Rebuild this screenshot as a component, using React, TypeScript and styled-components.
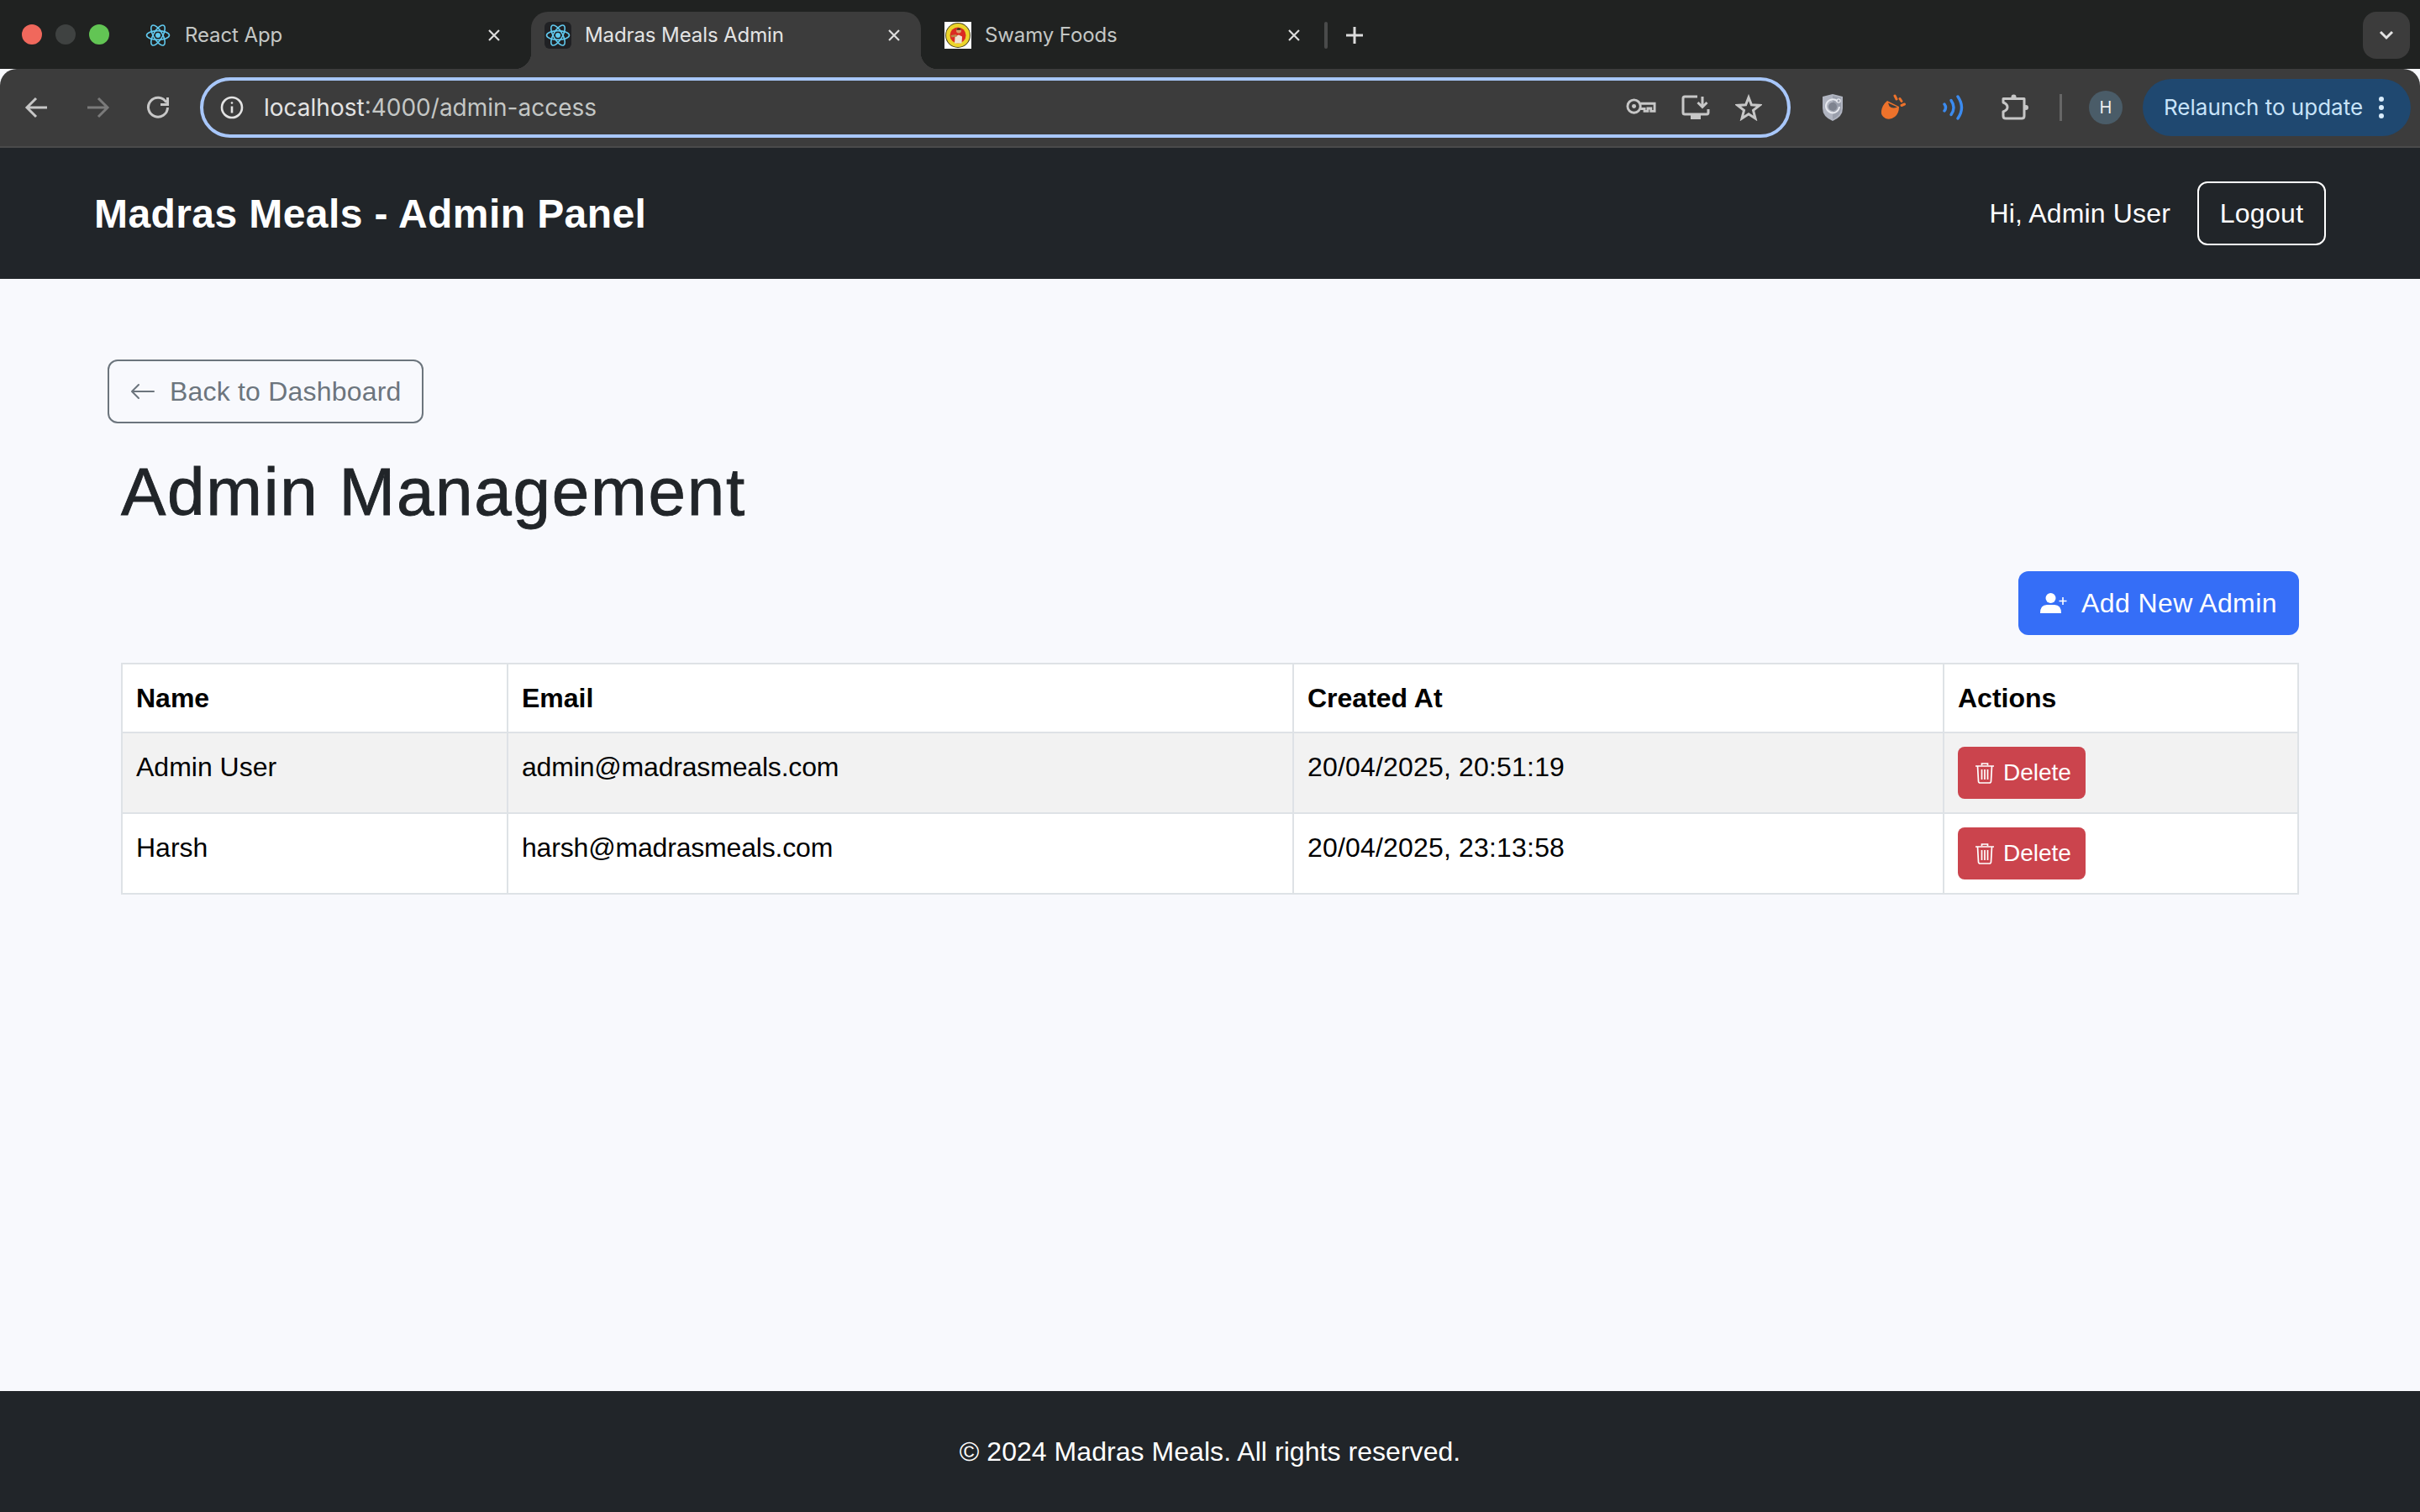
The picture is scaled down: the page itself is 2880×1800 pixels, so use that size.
import React, { FunctionComponent } from "react";
import styled, { createGlobalStyle } from "styled-components";
import { BsArrowLeft } from "react-icons/bs";

const GlobalStyle = createGlobalStyle`
  html, body {
    margin: 0;
    padding: 0;
    background: #f8f9fd;
  }
  * {
    box-sizing: border-box;
  }
`;

const Page = styled.div`
  display: flex;
  flex-direction: column;
  min-height: 1800px;
  font-family: "Liberation Sans", Arial, sans-serif;
  font-size: 32px;
  line-height: 48px;
`;

/* browser chrome */
const TabStrip = styled.div`
  display: flex;
  align-items: flex-end;
  height: 82px;
  background: #202221;
  font-family: Inter, "Liberation Sans", sans-serif;
  font-size: 24px;
`;

const Lights = styled.div`
  display: flex;
  gap: 16px;
  align-self: flex-start;
  padding: 29px 0 0 26px;
  width: 156px;
  flex: none;
`;

const Light = styled.span<{ $color: string }>`
  width: 24px;
  height: 24px;
  border-radius: 50%;
  background: ${(p) => p.$color};
`;

const Tabs = styled.div`
  display: flex;
  gap: 12px;
  align-items: flex-end;
`;

const Tab = styled.div<{ $active?: boolean }>`
  position: relative;
  display: flex;
  align-items: center;
  gap: 16px;
  width: 464px;
  height: 68px;
  padding: 0 24px 13px 16px;
  border-radius: 20px 20px 0 0;
  color: ${(p) => (p.$active ? "#e4e4e4" : "#c4c7c5")};
  background: ${(p) => (p.$active ? "#3c3c3c" : "transparent")};
  letter-spacing: -0.1px;

  ${(p) =>
    p.$active &&
    `
    &::before, &::after {
      content: "";
      position: absolute;
      bottom: 0;
      width: 20px;
      height: 20px;
    }
    &::before {
      left: -20px;
      background: radial-gradient(circle at 0 0, transparent 20px, #3c3c3c 20.5px);
    }
    &::after {
      right: -20px;
      background: radial-gradient(circle at 100% 0, transparent 20px, #3c3c3c 20.5px);
    }
  `}
`;

const FaviconBox = styled.span<{ $dark?: boolean }>`
  display: flex;
  align-items: center;
  justify-content: center;
  width: 32px;
  height: 32px;
  flex: none;
  border-radius: 6px;
  background: ${(p) => (p.$dark ? "#202124" : "transparent")};
`;

const TabTitle = styled.span`
  flex: 1;
  white-space: nowrap;
`;

const TabDivider = styled.span`
  width: 4px;
  height: 32px;
  margin: 0 0 24px 4px;
  border-radius: 2px;
  background: #4a4b4b;
`;

const NewTab = styled.span`
  display: flex;
  margin: 0 0 28px 20px;
`;

const TabMenu = styled.span`
  display: flex;
  align-items: center;
  justify-content: center;
  width: 56px;
  height: 56px;
  margin: 0 12px 12px auto;
  border-radius: 16px;
  background: #3c3c3c;
`;

const Toolbar = styled.div`
  display: flex;
  align-items: center;
  height: 94px;
  padding: 0 11px 0 0;
  background: #3c3c3c;
  border-bottom: 2px solid #4a4a4a;
  border-radius: 20px 20px 0 0;
  font-family: Inter, "Liberation Sans", sans-serif;
`;

const NavIcons = styled.div`
  display: flex;
  gap: 40px;
  width: 238px;
  flex: none;
  padding-left: 28px;
`;

const Omnibox = styled.div`
  display: flex;
  align-items: center;
  width: 1893px;
  height: 72px;
  flex: none;
  padding: 0 30px 0 20px;
  border: 4px solid #a8c7fa;
  border-radius: 36px;
  color: #e3e3e3;
  font-size: 28px;
  line-height: 1;
`;

const UrlHost = styled.span`
  margin-left: 24px;
`;

const UrlPath = styled.span`
  color: #c4c7c5;
  flex: 1;
`;

const OmniActions = styled.div`
  display: flex;
  gap: 30px;
  align-items: center;
`;

const Extensions = styled.div`
  display: flex;
  align-items: center;
  gap: 44px;
  margin-left: 37px;
`;

const ToolDivider = styled.span`
  width: 3px;
  height: 32px;
  margin-left: -7px;
  background: #666;
`;

const Avatar = styled.span`
  display: flex;
  align-items: center;
  justify-content: center;
  width: 40px;
  height: 40px;
  margin-left: -12px;
  border-radius: 50%;
  background: #4a5c68;
  color: #eee;
  font-size: 20px;
`;

const Relaunch = styled.div`
  display: flex;
  align-items: center;
  gap: 18px;
  width: 319px;
  height: 68px;
  margin-left: 24px;
  padding: 0 20px 0 25px;
  border-radius: 34px;
  background: #1f4870;
  color: #c7e3f9;
  font-size: 26px;
  white-space: nowrap;
`;

/* app */
const Navbar = styled.nav`
  display: flex;
  align-items: center;
  justify-content: space-between;
  height: 156px;
  padding: 0 112px;
  background: #212529;
  color: #fff;
`;

const Brand = styled.span`
  padding-top: 2px;
  font-size: 48px;
  font-weight: 700;
  line-height: 1.2;
  letter-spacing: 0.42px;
`;

const NavRight = styled.div`
  display: flex;
  align-items: center;
  gap: 32px;
  letter-spacing: 0.15px;
`;

const OutlineButton = styled.button<{ $color: string }>`
  display: inline-flex;
  align-items: center;
  justify-content: center;
  width: 153px;
  height: 76px;
  padding: 0;
  border: 2px solid ${(p) => p.$color};
  border-radius: 12px;
  background: transparent;
  color: ${(p) => p.$color};
  font: inherit;
  letter-spacing: 0.3px;
  white-space: nowrap;
`;

const Main = styled.main`
  flex: 1;
  display: flex;
  flex-direction: column;
  align-items: flex-start;
  padding: 96px 144px 0 128px;
`;

const BackButton = styled(OutlineButton)`
  justify-content: flex-start;
  gap: 16px;
  width: 376px;
  padding-left: 24px;
  letter-spacing: 0.2px;
`;

const Content = styled.div`
  width: 100%;
  padding-left: 16px;
`;

const Title = styled.h1`
  margin: 34px 0 46px;
  font-size: 80px;
  font-weight: 500;
  line-height: 96px;
  letter-spacing: 1.75px;
  -webkit-text-stroke: 0.9px #212529;
  color: #212529;
`;

const ActionRow = styled.div`
  display: flex;
  justify-content: flex-end;
  margin-bottom: 33px;
`;

const AddButton = styled.button`
  display: inline-flex;
  align-items: center;
  gap: 17px;
  height: 76px;
  width: 334px;
  padding: 0 0 0 26px;
  border: 0;
  border-radius: 12px;
  background: #356ef7;
  color: #fff;
  font: inherit;
  letter-spacing: 0.4px;
  white-space: nowrap;
`;

const Table = styled.table`
  width: 100%;
  table-layout: fixed;
  border-collapse: collapse;
  color: #000;
  background: #fff;
`;

const Th = styled.th<{ $width?: number }>`
  ${(p) => (p.$width ? `width: ${p.$width}px;` : "")}
  padding: 16px;
  border: 2px solid #dee2e6;
  font-weight: 700;
  text-align: left;
`;

const Row = styled.tr<{ $striped?: boolean }>`
  background: ${(p) => (p.$striped ? "#f2f2f2" : "#fff")};
`;

const Td = styled.td<{ $spacing?: number }>`
  padding: 16px;
  border: 2px solid #dee2e6;
  vertical-align: top;
  letter-spacing: ${(p) => p.$spacing ?? 0}px;
`;

const DeleteButton = styled.button`
  display: flex;
  align-items: center;
  gap: 10px;
  width: 152px;
  height: 62px;
  padding: 0 0 0 20px;
  border: 0;
  border-radius: 8px;
  background: #cb444d;
  color: #fff;
  font: inherit;
  font-size: 28px;
`;

const Footer = styled.footer`
  display: flex;
  align-items: center;
  justify-content: center;
  height: 144px;
  background: #212529;
  color: #fff;
  letter-spacing: 0.05px;
`;

/* icons */
const ReactAtom: FunctionComponent = () => (
  <svg width="30" height="32" viewBox="0 0 30 32" fill="none" stroke="#61c9ee" strokeWidth="1.6">
    <ellipse cx="15" cy="16" rx="13.5" ry="5.4" />
    <ellipse cx="15" cy="16" rx="13.5" ry="5.4" transform="rotate(60 15 16)" />
    <ellipse cx="15" cy="16" rx="13.5" ry="5.4" transform="rotate(120 15 16)" />
    <circle cx="15" cy="16" r="3" fill="#61c9ee" stroke="none" />
  </svg>
);

const SwamyIcon: FunctionComponent = () => (
  <svg width="32" height="32" viewBox="0 0 32 32">
    <rect width="32" height="32" fill="#fff" />
    <circle cx="16" cy="16" r="15" fill="#4a4420" />
    <circle cx="16" cy="16" r="14" fill="#ecd52a" />
    <circle cx="16" cy="16" r="9.5" fill="#db2a22" />
    <path d="M12 25.5 L12.5 17.5 L17 15.5 L21 17.5 L20.5 25.5 Z" fill="#efe2d2" />
    <circle cx="17" cy="10.5" r="3" fill="#d89a68" />
    <path d="M14 9.5 Q17 5.5 20 9.5 Z" fill="#1b1412" />
    <path d="M7.5 16 L14 15 L15 17.5 L8.5 18.5 Z" fill="#b98a4a" />
  </svg>
);

const CloseIcon: FunctionComponent = () => (
  <svg width="16" height="16" viewBox="0 0 16 16" stroke="#dcdcdc" strokeWidth="2.2">
    <path d="M2 2 L14 14 M14 2 L2 14" />
  </svg>
);

const PlusIcon: FunctionComponent = () => (
  <svg width="24" height="24" viewBox="0 0 24 24" stroke="#dcdcdc" strokeWidth="3">
    <path d="M12 2 V22 M2 12 H22" />
  </svg>
);

const ChevronIcon: FunctionComponent = () => (
  <svg width="20" height="14" viewBox="0 0 20 14" fill="none" stroke="#e3e3e3" strokeWidth="3">
    <path d="M3 3 L10 10 L17 3" />
  </svg>
);

const ArrowIcon: FunctionComponent<{ $flip?: boolean; color: string }> = ({ $flip, color }) => (
  <svg
    width="32"
    height="32"
    viewBox="0 0 32 32"
    fill="none"
    stroke={color}
    strokeWidth="3"
    transform={$flip ? "scale(-1 1)" : undefined}
  >
    <path d="M28 16 H5 M15 5 L4 16 L15 27" />
  </svg>
);

const ReloadIcon: FunctionComponent = () => (
  <svg width="32" height="32" viewBox="0 0 32 32" fill="none" stroke="#c7c7c7" strokeWidth="3">
    <path d="M26 10 A11.5 11.5 0 1 0 27.5 16" />
    <path d="M27.5 4 V12.5 H19" />
  </svg>
);

const InfoIcon: FunctionComponent = () => (
  <svg width="28" height="28" viewBox="0 0 28 28" fill="none" stroke="#e3e3e3" strokeWidth="2.6">
    <circle cx="14" cy="14" r="12" />
    <path d="M14 12.5 V20.5" />
    <circle cx="14" cy="8.5" r="1.3" fill="#e3e3e3" stroke="none" />
  </svg>
);

const KeyIcon: FunctionComponent = () => (
  <svg width="36" height="24" viewBox="0 0 37.5 25" fill="none" stroke="#c7c7c7" strokeWidth="3">
    <circle cx="10" cy="11" r="8" />
    <circle cx="10" cy="11" r="2.6" fill="#c7c7c7" stroke="none" />
    <path d="M18 7.5 H35.5 V17 H31 V13.5 H27 V17 H23 V14 H18" />
  </svg>
);

const InstallIcon: FunctionComponent = () => (
  <svg width="34" height="32" viewBox="0 0 34 32" fill="none" stroke="#c7c7c7" strokeWidth="3">
    <path d="M19 3 H4 Q2 3 2 5 V22 Q2 24 4 24 H30 Q32 24 32 22 V18" />
    <path d="M25 3 V15 M19.5 10 L25 15.5 L30.5 10" />
    <rect x="11" y="25" width="12" height="5" fill="#c7c7c7" stroke="none" />
  </svg>
);

const StarIcon: FunctionComponent = () => (
  <svg width="32" height="32" viewBox="0 0 32 32" fill="none" stroke="#c7c7c7" strokeWidth="3" strokeLinejoin="miter">
    <path d="M16 4 L19.4 12.8 L29 13.4 L21.5 19.3 L24 29 L16 23.8 L8 29 L10.5 19.3 L3 13.4 L12.6 12.8 Z" />
  </svg>
);

const ShieldIcon: FunctionComponent = () => (
  <svg width="26" height="34" viewBox="0 0 26 34">
    <path d="M13 1 L25 4 V18 Q25 28 13 33 Q1 28 1 18 V4 Z" fill="#b0b4c0" />
    <path d="M13 3 L23 5.5 V18 Q23 26.5 13 31 Z" fill="#9a9fac" />
    <path d="M18.5 9.5 A8 8 0 1 0 21 16" fill="none" stroke="#e6e8ee" strokeWidth="2" />
    <circle cx="13" cy="16" r="5" fill="#7e838f" />
    <circle cx="20" cy="9" r="2.2" fill="none" stroke="#e6e8ee" strokeWidth="1.2" />
  </svg>
);

const HornIcon: FunctionComponent = () => (
  <svg width="30" height="32" viewBox="0 0 30 32">
    <path d="M8 8 L22 15 Q22 23 17 27 Q12 31 6 29 Q0 26 1 20 Q2 13 8 8 Z" fill="#ed722b" />
    <path d="M9 10.5 L20 15.5 Q14 18 10.5 14.5 Z" fill="#3c3c3c" />
    <path d="M17 2 L19 6 M23 5.5 L25 8.5 M25 13.5 L28.5 12" stroke="#ed722b" strokeWidth="3" strokeLinecap="round" />
  </svg>
);

const WavesIcon: FunctionComponent = () => (
  <svg width="26" height="30" viewBox="0 0 26 30" fill="none" stroke="#3b8bf0" strokeWidth="3.4" strokeLinecap="round">
    <path d="M2 11 Q5 15 2 19" />
    <path d="M10 6.5 Q16 15 10 23.5" />
    <path d="M18 2 Q27 15 18 28" />
  </svg>
);

const PuzzleIcon: FunctionComponent = () => (
  <svg width="32" height="32" viewBox="0 0 32 32" fill="none" stroke="#c7c7c7" strokeWidth="3" strokeLinejoin="round">
    <path d="M2 5.5 H27 V26 Q27 29 24 29 H5 Q2 29 2 26 V21 Q7 19 7 15.5 Q7 12 2 10 Z" />
    <circle cx="14.5" cy="3.5" r="3" fill="#c7c7c7" stroke="none" />
    <circle cx="29" cy="16" r="3" fill="#c7c7c7" stroke="none" />
  </svg>
);

const DotsIcon: FunctionComponent = () => (
  <svg width="8" height="28" viewBox="0 0 8 28" fill="#d9ecfb">
    <circle cx="4" cy="4" r="3" />
    <circle cx="4" cy="14" r="3" />
    <circle cx="4" cy="24" r="3" />
  </svg>
);

const UserPlusIcon: FunctionComponent = () => (
  <svg width="32" height="24" viewBox="0 0 32 24" fill="#fff">
    <circle cx="12.5" cy="6" r="6" />
    <path d="M0 24 Q0 14 8 14 H17 Q25 14 25 24 Z" />
    <path d="M27 5 V14 M22.5 9.5 H31.5" stroke="#fff" strokeWidth="1.6" />
  </svg>
);

const TrashIcon: FunctionComponent = () => (
  <svg width="24" height="26" viewBox="0 0 24 26" fill="none" stroke="#fff" strokeWidth="1.7">
    <path d="M1 5 H23 M8.5 4 V2 H15.5 V4" />
    <path d="M3.5 5 L4.5 23 Q4.6 25 6.5 25 H17.5 Q19.4 25 19.5 23 L20.5 5" />
    <path d="M8.5 9 V21 M12 9 V21 M15.5 9 V21" />
  </svg>
);

const admins = [
  { name: "Admin User", email: "admin@madrasmeals.com", created: "20/04/2025, 20:51:19" },
  { name: "Harsh", email: "harsh@madrasmeals.com", created: "20/04/2025, 23:13:58" },
];

const App: FunctionComponent = () => {
  return (
    <Page>
      <GlobalStyle />
      <TabStrip>
        <Lights>
          <Light $color="#f0685c" />
          <Light $color="#3f4241" />
          <Light $color="#62c554" />
        </Lights>
        <Tabs>
          <Tab>
            <FaviconBox>
              <ReactAtom />
            </FaviconBox>
            <TabTitle>React App</TabTitle>
            <CloseIcon />
          </Tab>
          <Tab $active>
            <FaviconBox $dark>
              <ReactAtom />
            </FaviconBox>
            <TabTitle>Madras Meals Admin</TabTitle>
            <CloseIcon />
          </Tab>
          <Tab>
            <FaviconBox>
              <SwamyIcon />
            </FaviconBox>
            <TabTitle>Swamy Foods</TabTitle>
            <CloseIcon />
          </Tab>
        </Tabs>
        <TabDivider />
        <NewTab>
          <PlusIcon />
        </NewTab>
        <TabMenu>
          <ChevronIcon />
        </TabMenu>
      </TabStrip>
      <Toolbar>
        <NavIcons>
          <ArrowIcon color="#c7c7c7" />
          <ArrowIcon color="#7a7a7a" $flip />
          <ReloadIcon />
        </NavIcons>
        <Omnibox>
          <InfoIcon />
          <UrlHost>localhost</UrlHost>
          <UrlPath>:4000/admin-access</UrlPath>
          <OmniActions>
            <KeyIcon />
            <InstallIcon />
            <StarIcon />
          </OmniActions>
        </Omnibox>
        <Extensions>
          <ShieldIcon />
          <HornIcon />
          <WavesIcon />
          <PuzzleIcon />
          <ToolDivider />
          <Avatar>H</Avatar>
        </Extensions>
        <Relaunch>
          Relaunch to update
          <DotsIcon />
        </Relaunch>
      </Toolbar>

      <Navbar>
        <Brand>Madras Meals - Admin Panel</Brand>
        <NavRight>
          <span>Hi, Admin User</span>
          <OutlineButton $color="#fff">Logout</OutlineButton>
        </NavRight>
      </Navbar>

      <Main>
        <BackButton $color="#6c757d">
          <BsArrowLeft size={32} />
          Back to Dashboard
        </BackButton>
        <Content>
          <Title>Admin Management</Title>
          <ActionRow>
            <AddButton>
              <UserPlusIcon />
              Add New Admin
            </AddButton>
          </ActionRow>
          <Table>
            <thead>
              <tr>
                <Th $width={459}>Name</Th>
                <Th $width={935}>Email</Th>
                <Th $width={774}>Created At</Th>
                <Th>Actions</Th>
              </tr>
            </thead>
            <tbody>
              {admins.map((admin, index) => (
                <Row key={admin.email} $striped={index % 2 === 0}>
                  <Td>{admin.name}</Td>
                  <Td $spacing={-0.18}>{admin.email}</Td>
                  <Td $spacing={0.18}>{admin.created}</Td>
                  <Td>
                    <DeleteButton>
                      <TrashIcon />
                      Delete
                    </DeleteButton>
                  </Td>
                </Row>
              ))}
            </tbody>
          </Table>
        </Content>
      </Main>

      <Footer>© 2024 Madras Meals. All rights reserved.</Footer>
    </Page>
  );
};

export default App;
